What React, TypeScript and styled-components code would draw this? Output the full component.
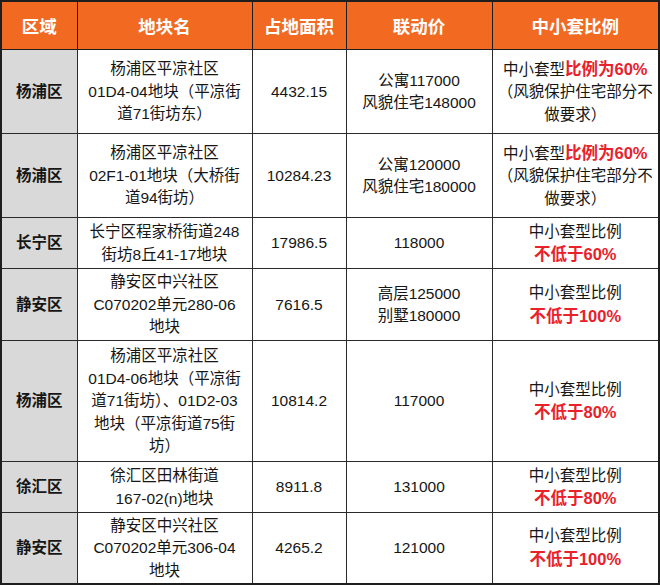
import React from "react";
import styled, { createGlobalStyle } from "styled-components";

const Global = createGlobalStyle`
  html, body { margin: 0; padding: 0; background: #ffffff; }
  body { font-family: "Liberation Sans", "Noto Sans CJK SC", sans-serif; }
`;

const Table = styled.table`
  border-collapse: collapse;
  table-layout: fixed;
  width: 658px;
  border: 2px solid #1e1e1e;
  color: #161616;
  font-family: "Liberation Sans", "Noto Sans CJK SC", sans-serif;
`;

const Col = styled.col<{ $w: number }>`
  width: ${(p) => p.$w}px;
`;

const HeadCell = styled.th`
  background: #f26a22;
  color: #ffffff;
  font-size: 17.5px;
  font-weight: 700;
  height: 47px;
  padding: 0;
  text-align: center;
  vertical-align: middle;
  border: 1px solid #1e1e1e;
`;

const Row = styled.tr<{ $h: number }>`
  height: ${(p) => p.$h}px;
`;

const Cell = styled.td`
  font-size: 15.5px;
  line-height: 22.5px;
  text-align: center;
  vertical-align: middle;
  padding: 1px 2px 0;
  border: 1.5px solid #2a2a2a;
  white-space: nowrap;
`;

const RegionCell = styled(Cell)`
  background: #d9d9d9;
  font-weight: 700;
  font-size: 15.5px;
`;

const Red = styled.span`
  color: #e8212b;
  font-weight: 700;
  font-size: 16.5px;
`;

type RowData = {
  h: number;
  region: string;
  name: string[];
  area: string;
  price: string[];
  ratio: React.ReactNode;
};

const lowest = (v: string) => (
  <>
    中小套型比例
    <br />
    <Red>不低于{v}</Red>
  </>
);

const sixty = (
  <>
    中小套型<Red>比例为60%</Red>
    <br />
    （风貌保护住宅部分不
    <br />
    做要求）
  </>
);

const rows: RowData[] = [
  {
    h: 84,
    region: "杨浦区",
    name: ["杨浦区平凉社区", "01D4-04地块（平凉街", "道71街坊东）"],
    area: "4432.15",
    price: ["公寓117000", "风貌住宅148000"],
    ratio: sixty,
  },
  {
    h: 84,
    region: "杨浦区",
    name: ["杨浦区平凉社区", "02F1-01地块（大桥街", "道94街坊）"],
    area: "10284.23",
    price: ["公寓120000", "风貌住宅180000"],
    ratio: sixty,
  },
  {
    h: 51,
    region: "长宁区",
    name: ["长宁区程家桥街道248", "街坊8丘41-17地块"],
    area: "17986.5",
    price: ["118000"],
    ratio: lowest("60%"),
  },
  {
    h: 72,
    region: "静安区",
    name: ["静安区中兴社区", "C070202单元280-06", "地块"],
    area: "7616.5",
    price: ["高层125000", "别墅180000"],
    ratio: lowest("100%"),
  },
  {
    h: 121,
    region: "杨浦区",
    name: [
      "杨浦区平凉社区",
      "01D4-06地块（平凉街",
      "道71街坊）、01D2-03",
      "地块（平凉街道75街",
      "坊）",
    ],
    area: "10814.2",
    price: ["117000"],
    ratio: lowest("80%"),
  },
  {
    h: 51,
    region: "徐汇区",
    name: ["徐汇区田林街道", "167-02(n)地块"],
    area: "8911.8",
    price: ["131000"],
    ratio: lowest("80%"),
  },
  {
    h: 71,
    region: "静安区",
    name: ["静安区中兴社区", "C070202单元306-04", "地块"],
    area: "4265.2",
    price: ["121000"],
    ratio: lowest("100%"),
  },
];

const Lines = ({ items }: { items: string[] }) => (
  <>
    {items.map((t, i) => (
      <React.Fragment key={i}>
        {i > 0 && <br />}
        {t}
      </React.Fragment>
    ))}
  </>
);

export default function App() {
  return (
    <>
      <Global />
      <Table>
        <colgroup>
          <Col $w={76} />
          <Col $w={175} />
          <Col $w={94} />
          <Col $w={146} />
          <Col $w={167} />
        </colgroup>
        <thead>
          <tr>
            <HeadCell>区域</HeadCell>
            <HeadCell>地块名</HeadCell>
            <HeadCell>占地面积</HeadCell>
            <HeadCell>联动价</HeadCell>
            <HeadCell>中小套比例</HeadCell>
          </tr>
        </thead>
        <tbody>
          {rows.map((r, i) => (
            <Row key={i} $h={r.h}>
              <RegionCell>{r.region}</RegionCell>
              <Cell>
                <Lines items={r.name} />
              </Cell>
              <Cell>{r.area}</Cell>
              <Cell>
                <Lines items={r.price} />
              </Cell>
              <Cell>{r.ratio}</Cell>
            </Row>
          ))}
        </tbody>
      </Table>
    </>
  );
}
